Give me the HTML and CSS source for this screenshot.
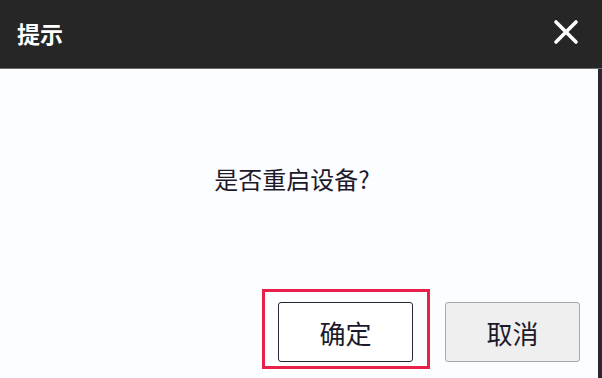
FILE: index.html
```html
<!DOCTYPE html>
<html lang="zh-CN">
<head>
<meta charset="utf-8">
<link rel="stylesheet" href="styles.css">
</head>
<body>
<div class="dialog">
  <div class="header">
    <span class="title">提示</span>
    <svg class="close" width="26" height="26" viewBox="0 0 26 26"><path d="M3 3 L23 23 M23 3 L3 23" stroke="#fff" stroke-width="3.6" stroke-linecap="round"/></svg>
  </div>
  <div class="body">
    <div class="message">是否重启设备?</div>
    <div class="footer">
      <div class="btn-wrap">
        <button class="btn btn-ok">确定</button>
        <span class="mark"></span>
      </div>
      <button class="btn btn-cancel">取消</button>
    </div>
  </div>
</div>
</body>
</html>
```
FILE: styles.css
```css
html, body {
  margin: 0;
  padding: 0;
  width: 602px;
  height: 378px;
  overflow: hidden;
  background: #fdfdfe;
  font-family: "Noto Sans CJK SC", "Noto Sans", sans-serif;
}
.dialog {
  display: flex;
  flex-direction: column;
  height: 378px;
}
.header {
  height: 68px;
  background: #262626;
  border-bottom: 1px solid #6a6a6a;
  display: flex;
  align-items: center;
  justify-content: space-between;
  padding: 0 23px 0 17px;
  flex-shrink: 0;
}
.title {
  color: #fff;
  font-size: 23px;
  font-weight: 700;
  line-height: 1;
  margin-top: -2px;
}
.close {
  display: block;
  margin-top: -4px;
}
.body {
  flex: 1;
  display: flex;
  flex-direction: column;
  border-right: 4px solid #2e2530;
  background: #fcfdff;
}
.message {
  text-align: center;
  font-size: 24px;
  color: #1c1a2a;
  line-height: 32px;
  margin-top: 94px;
  padding-right: 14px;
}
.footer {
  display: flex;
  justify-content: flex-end;
  gap: 32px;
  padding-right: 18px;
  margin-top: 107px;
}
.btn-wrap {
  position: relative;
}
.btn {
  width: 135px;
  height: 60px;
  font-family: "Noto Sans CJK SC", sans-serif;
  font-size: 26px;
  color: #1c1a2a;
  border-radius: 3px;
  padding: 0;
  display: block;
}
.btn-ok {
  background: #fff;
  border: 1.5px solid #2a2535;
}
.btn-cancel {
  background: #efefef;
  border: 1px solid #a8a8a8;
}
.mark {
  position: absolute;
  left: -16px;
  top: -13px;
  width: 162px;
  height: 74px;
  border: 3px solid #e8204a;
}
```
